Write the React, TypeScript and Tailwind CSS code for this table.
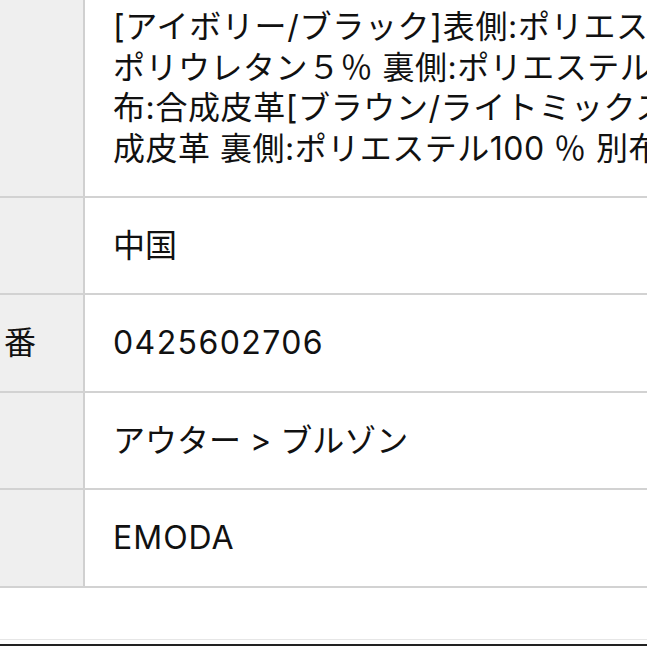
import React from "react";

const font = { fontFamily: 'Inter, "Noto Sans CJK JP", sans-serif' };

function Row({
  label,
  children,
  h,
  top,
}: {
  label?: string;
  children: React.ReactNode;
  h: string;
  top?: boolean;
}) {
  return (
    <div className={`flex border-b-2 border-[#d2d2d2] ${h}`}>
      <div className="w-[85px] shrink-0 bg-[#efefef] border-r-2 border-[#d0d0d0] flex items-center pl-[4px] text-[32px] text-[#111]">
        {label}
      </div>
      <div
        className={`flex-1 min-w-0 overflow-hidden pl-[28px] text-[32px] text-[#111] flex flex-col ${
          top ? "justify-start pt-[7px]" : "justify-center"
        }`}
      >
        {children}
      </div>
    </div>
  );
}

export default function App() {
  return (
    <div
      className="w-[647px] h-[647px] overflow-hidden bg-white flex flex-col"
      style={font}
    >
      <Row h="h-[198px]" top>
        <div className="leading-[40.5px] whitespace-nowrap tracking-[0.7px]">
          [アイボリー/ブラック]表側:ポリエステル９５％
        </div>
        <div className="leading-[40.5px] whitespace-nowrap tracking-[0.5px]">
          ポリウレタン５％ 裏側:ポリエステル１００％
        </div>
        <div className="leading-[40.5px] whitespace-nowrap tracking-[0.6px]">
          布:合成皮革[ブラウン/ライトミックス]表側:合
        </div>
        <div className="leading-[40.5px] whitespace-nowrap tracking-[0.5px]">
          成皮革 裏側:ポリエステル100 ％ 別布:合成皮革
        </div>
      </Row>
      <Row h="h-[97px]">
        <div className="leading-[40px] whitespace-nowrap">中国</div>
      </Row>
      <Row h="h-[98px]" label="番">
        <div className="leading-[40px] whitespace-nowrap tracking-[1.4px]">0425602706</div>
      </Row>
      <Row h="h-[97px]">
        <div className="leading-[40px] whitespace-nowrap">アウター &gt; ブルゾン</div>
      </Row>
      <Row h="h-[98px]">
        <div className="leading-[40px] whitespace-nowrap tracking-[1px]">EMODA</div>
      </Row>
      <div className="h-[52px] border-b border-[#e6e6e6]" />
      <div className="h-[4px]" />
      <div className="h-[2px] bg-[#222]" />
    </div>
  );
}
